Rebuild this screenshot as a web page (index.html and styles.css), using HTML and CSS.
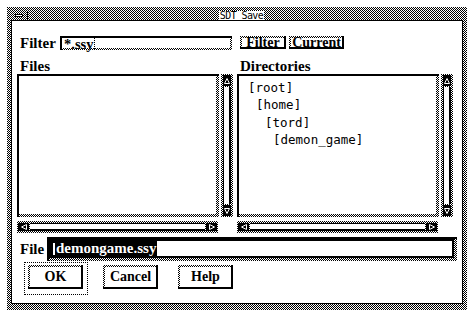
FILE: index.html
```html
<!DOCTYPE html>
<html lang="en">
  <head>
    <meta charset="UTF-8" />
    <title>SDT Save</title>
    <link rel="stylesheet" href="styles.css">
  </head>
  <body>
    <div class="window">
      <div class="titlebar">
        <div class="menu-button"><span></span></div>
        <div class="title"><span>SDT Save</span></div>
      </div>
      <div class="dialog">
        <div class="panes">
          <div class="filter-row">
            <div class="label">Filter</div>
            <div class="field">
              <div class="field-inner"><span class="field-text">*.ssy</span><span class="caret"></span></div>
            </div>
          </div>
          <div class="filter-buttons">
            <button class="btn small filter"><span>Filter</span></button>
            <button class="btn small current"><span>Current</span></button>
          </div>

          <div class="heading">Files</div>
          <div class="heading">Directories</div>

          <div class="list-row">
            <div class="list"><div class="list-inner"></div></div>
            <div class="vscroll">
              <div class="arrow">
                <svg width="6" height="6" viewBox="0 0 6 6"><path d="M3 0.5 L5.5 5.5 L0.5 5.5 Z" fill="none" stroke="#fff" stroke-width="1"/></svg>
              </div>
              <div class="vthumb"></div>
              <div class="arrow">
                <svg width="6" height="6" viewBox="0 0 6 6"><path d="M0.5 0.5 L5.5 0.5 L3 5.5 Z" fill="none" stroke="#fff" stroke-width="1"/></svg>
              </div>
            </div>
          </div>
          <div class="list-row">
            <div class="list">
              <div class="list-inner">
                <div class="dir">[root]</div>
                <div class="dir level1">[home]</div>
                <div class="dir level2">[tord]</div>
                <div class="dir level3">[demon_game]</div>
              </div>
            </div>
            <div class="vscroll">
              <div class="arrow">
                <svg width="6" height="6" viewBox="0 0 6 6"><path d="M3 0.5 L5.5 5.5 L0.5 5.5 Z" fill="none" stroke="#fff" stroke-width="1"/></svg>
              </div>
              <div class="vthumb"></div>
              <div class="arrow">
                <svg width="6" height="6" viewBox="0 0 6 6"><path d="M0.5 0.5 L5.5 0.5 L3 5.5 Z" fill="none" stroke="#fff" stroke-width="1"/></svg>
              </div>
            </div>
          </div>

          <div class="hscroll">
            <div class="arrow">
              <svg width="6" height="6" viewBox="0 0 6 6"><path d="M0.5 3 L5.5 0.5 L5.5 5.5 Z" fill="none" stroke="#fff" stroke-width="1"/></svg>
            </div>
            <div class="hthumb"></div>
            <div class="arrow">
              <svg width="6" height="6" viewBox="0 0 6 6"><path d="M5.5 3 L0.5 0.5 L0.5 5.5 Z" fill="none" stroke="#fff" stroke-width="1"/></svg>
            </div>
          </div>
          <div class="hscroll">
            <div class="arrow">
              <svg width="6" height="6" viewBox="0 0 6 6"><path d="M0.5 3 L5.5 0.5 L5.5 5.5 Z" fill="none" stroke="#fff" stroke-width="1"/></svg>
            </div>
            <div class="hthumb"></div>
            <div class="arrow">
              <svg width="6" height="6" viewBox="0 0 6 6"><path d="M5.5 3 L0.5 0.5 L0.5 5.5 Z" fill="none" stroke="#fff" stroke-width="1"/></svg>
            </div>
          </div>
        </div>

        <div class="file-row">
          <div class="label">File</div>
          <div class="file-field">
            <div class="file-inner">
              <div class="selection"><span class="ibeam"></span>demongame.ssy</div>
            </div>
          </div>
        </div>

        <div class="actions">
          <button class="btn big default"><span>OK</span></button>
          <button class="btn big"><span>Cancel</span></button>
          <button class="btn big"><span>Help</span></button>
        </div>
      </div>
    </div>
  </body>
</html>
```

FILE: styles.css
```css
body {
  margin: 0;
  background-color: #fff;
  color: #000;
  font-family: "Liberation Serif", "Times New Roman", serif;
}

/* 50% grey as a 1px checkerboard (stripes xor'd together) */
.window,
.titlebar,
.field,
.btn,
.list,
.vscroll,
.hscroll,
.file-field {
  background-color: transparent;
  background-image: repeating-linear-gradient(90deg, #000 0 1px, #fff 1px 2px),
    repeating-linear-gradient(0deg, #000 0 1px, #fff 1px 2px);
  background-blend-mode: difference;
}

.window {
  margin: 7px 0 0 7px;
  width: 460px;
  padding: 4px 4px 6px 4px;
  box-sizing: border-box;
}

/* title bar */
.titlebar {
  display: flex;
  height: 9px;
  border-bottom: 1px solid #000;
}
.menu-button {
  width: 16px;
  border-right: 1px solid #000;
  display: flex;
  align-items: center;
  justify-content: center;
}
.menu-button span {
  width: 6px;
  height: 1px;
  background: #fff;
  border: 1px solid #000;
}
.title {
  flex: 1;
  display: flex;
  justify-content: center;
  padding-right: 8px;
}
.title span {
  background: #fff;
  padding: 0 1px;
  font: 10px/9px "DejaVu Sans Mono", monospace;
  letter-spacing: -0.6px;
}

/* dialog body */
.dialog {
  background: #fff;
  border: 1px solid #000;
  border-top: 0;
  padding: 15px 5px 14px;
}
.panes {
  display: grid;
  grid-template-columns: 216px 216px;
  column-gap: 4px;
}

.label,
.heading {
  font-weight: bold;
  font-size: 15px;
}

.filter-row {
  display: flex;
  align-items: center;
  height: 14px;
  padding: 0 1px 0 3px;
}
.filter-row .label {
  width: 40px;
  line-height: 15px;
}
.field {
  flex: 1;
  height: 14px;
  box-sizing: border-box;
  border-top: 2px solid #000;
  border-left: 2px solid #000;
  padding: 0 2px 2px 0;
}
.field-inner {
  display: flex;
  align-items: center;
  height: 10px;
  background: #fff;
  padding-left: 2px;
}
.field-text {
  margin-top: 2px;
  font-weight: bold;
  font-size: 14.5px;
  line-height: 10px;
  white-space: nowrap;
}
.caret {
  width: 0;
  height: 12px;
  margin-left: 1px;
  border-left: 1px dotted #000;
}

.filter-buttons {
  display: flex;
  gap: 3px;
  padding-left: 3px;
  height: 14px;
}

.btn {
  appearance: none;
  margin: 0;
  padding: 2px 0 0 2px;
  border: 0;
  border-right: 2px solid #000;
  border-bottom: 2px solid #000;
  box-sizing: border-box;
  font-family: "Liberation Serif", "Times New Roman", serif;
  font-weight: bold;
  font-size: 14px;
  color: #000;
}
.btn span {
  display: flex;
  align-items: center;
  justify-content: center;
  height: 100%;
  background: #fff;
}
.btn.small {
  height: 13px;
  line-height: 10px;
}
.btn.filter {
  width: 46px;
}
.btn.current {
  width: 55px;
}

.heading {
  margin-top: 8px;
  height: 16px;
  line-height: 16px;
  padding-left: 3px;
}

/* lists */
.list-row {
  display: flex;
  gap: 2px;
  height: 143px;
}
.list {
  width: 202px;
  box-sizing: border-box;
  border-top: 2px solid #000;
  border-left: 2px solid #000;
  padding: 0 3px 3px 0;
}
.list-inner {
  height: 100%;
  box-sizing: border-box;
  background: #fff;
  padding: 3px 0 0 9px;
  font: 12.5px/17.3px "DejaVu Sans Mono", monospace;
}
.dir.level1 {
  padding-left: 8px;
}
.dir.level2 {
  padding-left: 17px;
}
.dir.level3 {
  padding-left: 25px;
}

/* scrollbars */
.arrow {
  flex: none;
  display: flex;
  align-items: center;
  justify-content: center;
  background: #000;
}
.vscroll {
  width: 12px;
  box-sizing: border-box;
  display: flex;
  flex-direction: column;
  padding: 1px 2px;
}
.vscroll .arrow {
  height: 11px;
}
.vthumb {
  flex: 1;
  margin: 1px 0;
  background: #fff;
  border-left: 1px solid #000;
  border-right: 2px solid #000;
}
.hscroll {
  width: 201px;
  height: 12px;
  box-sizing: border-box;
  margin-top: 4px;
  display: flex;
  padding: 2px 1px;
}
.hscroll .arrow {
  width: 11px;
}
.hthumb {
  flex: 1;
  margin: 0 1px;
  background: #fff;
  border-top: 1px solid #000;
  border-bottom: 2px solid #000;
}

/* file row */
.file-row {
  display: flex;
  align-items: center;
  height: 24px;
  margin-top: 4px;
  padding-left: 3px;
}
.file-row .label {
  width: 27px;
}
.file-field {
  flex: 1;
  height: 24px;
  box-sizing: border-box;
  border-top: 2px solid #000;
  border-left: 2px solid #000;
  padding: 0 3px 3px 0;
}
.file-inner {
  height: 100%;
  box-sizing: border-box;
  border: 2px solid #000;
  border-left-width: 1px;
  background: #fff;
  display: flex;
}
.selection {
  display: flex;
  align-items: center;
  padding: 0 1px 0 3px;
  background: #000;
  color: #fff;
  font-weight: bold;
  font-size: 15px;
  white-space: nowrap;
}
.ibeam {
  width: 2px;
  height: 12px;
  margin-right: 1px;
  background: #fff;
}

/* action buttons */
.actions {
  display: flex;
  gap: 20px;
  margin-top: 4px;
  padding-left: 11px;
}
.btn.big {
  width: 55px;
  height: 24px;
}
.btn.default {
  position: relative;
}
.btn.default::before {
  content: "";
  position: absolute;
  inset: -3px -7px -8px -4px;
  border: 1px dotted #000;
}
```
